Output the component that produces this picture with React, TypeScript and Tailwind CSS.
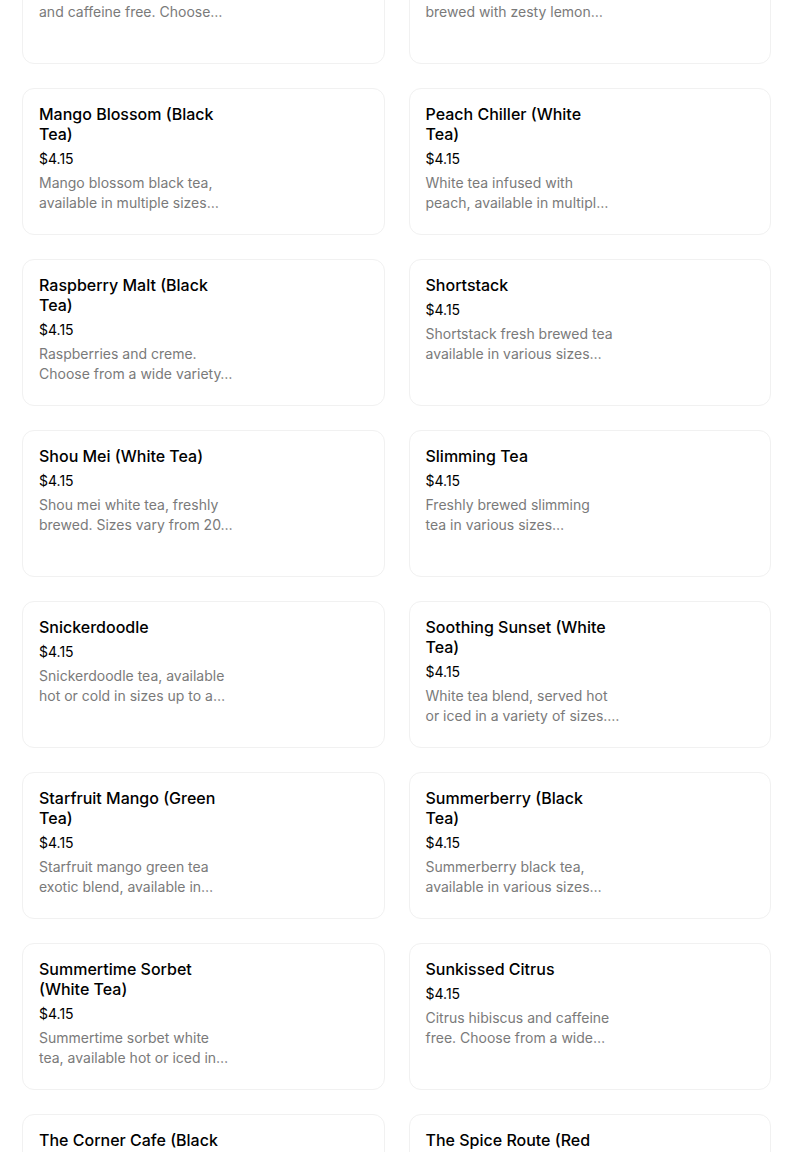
interface Item {
  title: string[];
  price: string;
  desc: [string, string];
}

const items: Item[] = [
  { title: ['Lemon Hibiscus'], price: '$4.15', desc: ['Lemon hibiscus, naturally sweet', 'and caffeine free. Choose…'] },
  { title: ['Lemon Ginger'], price: '$4.15', desc: ['Green tea with ginger, freshly', 'brewed with zesty lemon…'] },
  { title: ['Mango Blossom (Black', 'Tea)'], price: '$4.15', desc: ['Mango blossom black tea,', 'available in multiple sizes…'] },
  { title: ['Peach Chiller (White', 'Tea)'], price: '$4.15', desc: ['White tea infused with', 'peach, available in multipl…'] },
  { title: ['Raspberry Malt (Black', 'Tea)'], price: '$4.15', desc: ['Raspberries and creme.', 'Choose from a wide variety…'] },
  { title: ['Shortstack'], price: '$4.15', desc: ['Shortstack fresh brewed tea', 'available in various sizes…'] },
  { title: ['Shou Mei (White Tea)'], price: '$4.15', desc: ['Shou mei white tea, freshly', 'brewed. Sizes vary from 20…'] },
  { title: ['Slimming Tea'], price: '$4.15', desc: ['Freshly brewed slimming', 'tea in various sizes…'] },
  { title: ['Snickerdoodle'], price: '$4.15', desc: ['Snickerdoodle tea, available', 'hot or cold in sizes up to a…'] },
  { title: ['Soothing Sunset (White', 'Tea)'], price: '$4.15', desc: ['White tea blend, served hot', 'or iced in a variety of sizes.…'] },
  { title: ['Starfruit Mango (Green', 'Tea)'], price: '$4.15', desc: ['Starfruit mango green tea', 'exotic blend, available in…'] },
  { title: ['Summerberry (Black', 'Tea)'], price: '$4.15', desc: ['Summerberry black tea,', 'available in various sizes…'] },
  { title: ['Summertime Sorbet', '(White Tea)'], price: '$4.15', desc: ['Summertime sorbet white', 'tea, available hot or iced in…'] },
  { title: ['Sunkissed Citrus'], price: '$4.15', desc: ['Citrus hibiscus and caffeine', 'free. Choose from a wide…'] },
  { title: ['The Corner Cafe (Black', 'Tea)'], price: '$4.15', desc: ['Corner cafe black tea, served', 'hot or iced in many sizes…'] },
  { title: ['The Spice Route (Red', 'Tea)'], price: '$4.15', desc: ['Rooibos with warm spices,', 'available in various sizes…'] },
];

function MenuCard({ item }: { item: Item }) {
  return (
    <div className="h-[147px] rounded-xl border border-[#f1f1f1] bg-white px-4 pt-[15px]">
      <div className="w-[188px]">
        <h3 className="text-[16px] leading-5 font-medium text-black">
          {item.title.map((line) => (
            <span key={line} className="block whitespace-nowrap">
              {line}
            </span>
          ))}
        </h3>
        <p className="mt-[5px] text-[14px] leading-5 text-black">{item.price}</p>
        <p className="mt-1 text-[14px] leading-5 text-[#7a7a7a]">
          <span className="block whitespace-nowrap">{item.desc[0]}</span>
          <span className="block whitespace-nowrap">{item.desc[1]}</span>
        </p>
      </div>
    </div>
  );
}

export default function App() {
  return (
    <div className="h-[1152px] overflow-hidden bg-white" style={{ fontFamily: 'Inter, "Noto Sans", sans-serif' }}>
      <div className="-mt-[83px] ml-[22px] w-[749px] grid grid-cols-2 gap-x-6 gap-y-6">
        {items.map((item) => (
          <MenuCard key={item.title.join(' ')} item={item} />
        ))}
      </div>
    </div>
  );
}
